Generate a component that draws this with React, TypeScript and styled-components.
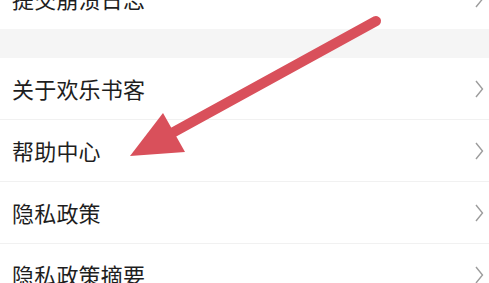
import styled, { createGlobalStyle } from 'styled-components';

const GlobalStyle = createGlobalStyle`
    html, body {
        margin: 0;
        padding: 0;
        background: #ffffff;
        overflow: hidden;
    }
`;

const Screen = styled.div`
    position: relative;
    width: 489px;
    height: 283px;
    overflow: hidden;
    font-family: 'Noto Sans CJK SC', 'Noto Sans', sans-serif;
`;

const List = styled.div`
    display: flex;
    flex-direction: column;
    margin-top: -32px;
`;

const Row = styled.div<{ $last?: boolean }>`
    height: 61px;
    display: flex;
    align-items: center;
    justify-content: space-between;
    padding: 0 5px 0 12px;
    border-bottom: ${({ $last }) => ($last ? 'none' : '1px solid #f1f1f1')};
`;

const Label = styled.span`
    font-size: 22px;
    color: #1e1e1e;
    letter-spacing: 0.2px;
    margin-top: -1px;
`;

const Gap = styled.div`
    height: 29px;
    background: #f5f5f5;
`;

const Overlay = styled.svg`
    position: absolute;
    left: 0;
    top: 0;
    pointer-events: none;
`;

function Chevron() {
    return (
        <svg width="10" height="18" viewBox="0 0 10 18">
            <path d="M2 1 L8.5 9 L2 17" fill="none" stroke="#9c9c9c" strokeWidth="1.4" />
        </svg>
    );
}

const items = ['提交崩溃日志', null, '关于欢乐书客', '帮助中心', '隐私政策', '隐私政策摘要'];

export default function App() {
    return (
        <Screen>
            <GlobalStyle />
            <List>
                {items.map((item, i) =>
                    item === null ? (
                        <Gap key={i} />
                    ) : (
                        <Row key={i} $last={i === 0}>
                            <Label>{item}</Label>
                            <Chevron />
                        </Row>
                    )
                )}
            </List>
            <Overlay width="489" height="283" viewBox="0 0 489 283">
                <line x1="376" y1="21" x2="172" y2="133" stroke="#d9505b" strokeWidth="10" strokeLinecap="round" />
                <polygon points="130,156 163,113 185,152" fill="#d9505b" />
            </Overlay>
        </Screen>
    );
}
